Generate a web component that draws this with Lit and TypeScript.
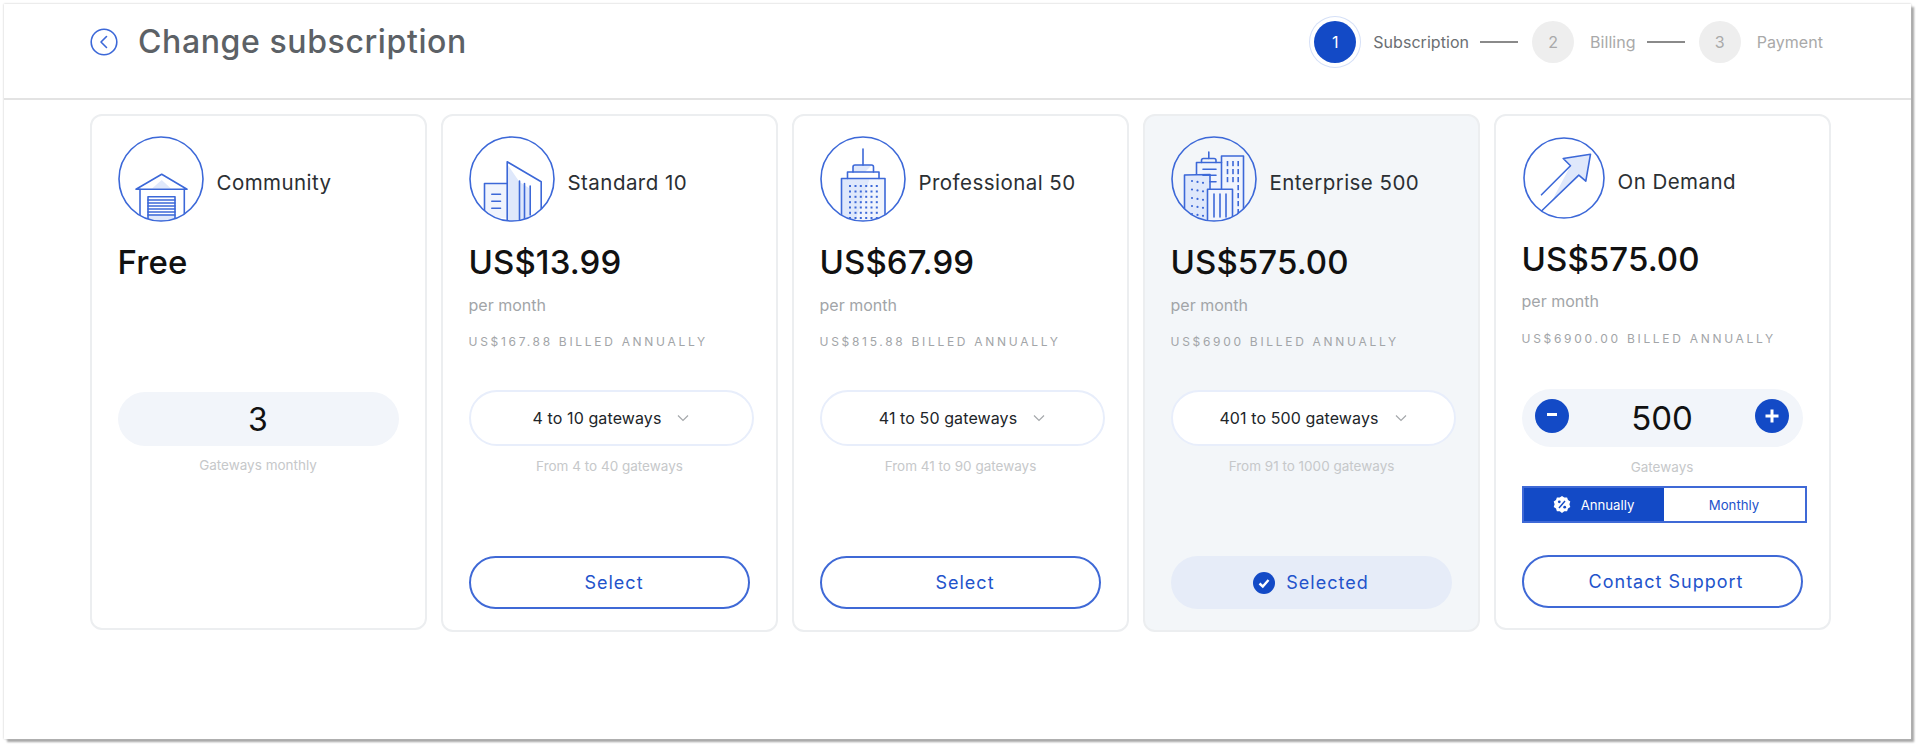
import { LitElement, html, css, svg } from "lit";
import { customElement } from "lit/decorators.js";
import { classMap } from "lit/directives/class-map.js";

const range = (from: number, to: number, step = 1) => {
  const out: number[] = [];
  for (let v = from; v <= to; v += step) out.push(v);
  return out;
};

const icons: Record<string, unknown> = {
  garage: svg`
    <path class="tint" d="M43.7 44 L34 52.5 H53 Z"/>
    <path class="tint" d="M30 78 H57 V86 H30 Z"/>
    <path d="M18 53.3 L43.7 38.3 L69 53.3 Z"/>
    <path d="M22 53.3 V82 M66.3 53.3 V80"/>
    <path d="M30 86 V60.7 H57 V86"/>
    <path d="M30 64 H57 M30 67 H57 M30 70 H57 M30 73 H57 M30 76 H57 M30 79 H57"/>`,
  tower: svg`
    <path class="tint2" d="M15.5 47.5 H38 V82 H15.5 Z"/>
    <path class="tint" d="M38.2 28 L50.5 46 L60 52 L61 84 H38.2 Z"/>
    <path d="M15.5 76 V47.5 H38.2"/>
    <path d="M38.2 84 V25.8 L72.2 45.8 V73.5"/>
    <path d="M50.5 45 V84 M55.5 47.5 V82.5 M61.2 50 V79"/>
    <path d="M22.8 58.2 H31.5 M22.8 65.2 H31.5 M22.8 72.2 H31.5"/>`,
  skyscraper: svg`
    <path class="tint" d="M33 36 V31 Q33 29 35 29 H52 L45 36 Z"/>
    <path class="tint" d="M21.5 42.5 H50 L36 84 H21.5 Z"/>
    <path class="tint2" d="M50 42.5 H65 V84 H36 Z"/>
    <path d="M43 13 V29"/>
    <path d="M33 36 V31 Q33 29 35 29 H51.5 Q53.5 29 53.5 31 V36"/>
    <path d="M27.5 42.5 V36 H59 V42.5"/>
    <path d="M21.5 80 V42.5 H65 V80"/>
    ${[50, 55.5, 60.8, 66.2, 71.5, 76.8, 82].flatMap((y) =>
      [30, 35.5, 40.8, 46.2, 51.5, 56.8].map(
        (x) => svg`<rect class="fill" x=${x - 1} y=${y - 1} width="2" height="2"/>`
      )
    )}`,
  city: svg`
    <path class="tint2" d="M25.5 26.5 H50.5 V54 H25.5 Z"/>
    <path class="tint2" d="M50.5 20 H72.5 V78 H50.5 Z"/>
    <path class="tint" d="M13.5 38.5 H39 V84 H13.5 Z"/>
    <path class="tint2" d="M36.5 53.2 H61.5 V84 H36.5 Z"/>
    <path d="M37.8 16 V22.5"/>
    <path d="M30.5 26.5 V24.5 Q30.5 22.5 32.5 22.5 H43 Q45 22.5 45 24.5 V26.5"/>
    <path d="M25.5 38 V26.5 H50.5"/>
    <path d="M32 33.2 H45 M32 39.2 H45 M39 45.8 H45"/>
    <path d="M50.5 53 V20 H72.5 V74"/>
    <path d="M13.5 74 V39 L39 38.5 V53"/>
    <path d="M36.5 84 V53.2 H61.5 V84"/>
    <path d="M43 58 V81 M49 58 V81 M55 58 V81"/>
    ${[25, 33, 41].flatMap((y) =>
      [56.5, 62, 67.2].map(
        (x) => svg`<rect class="fill" x=${x - 0.8} y=${y} width="1.6" height="5.2"/>`
      )
    )}
    ${range(49, 73, 8).map(
      (y) => svg`<rect class="fill" x="66.4" y=${y} width="1.6" height="5.2"/>`
    )}
    ${[45, 53.5, 62, 70, 78].flatMap((y) =>
      [21, 26.5, 32].map(
        (x) => svg`<circle class="fill" cx=${x} cy=${y + (x - 21) / 6} r="1.1"/>`
      )
    )}`,
  arrow: svg`
    <path class="tint" d="M47.5 28.8 L40.2 21.5 L67.5 17.2 L62.8 44.2 L55.8 38.2 L28 66 L33 56 Z"/>
    <path d="M18.5 57.8 L47.5 28.8 L40.2 21.5 L67.5 17.2 L62.8 44.2 L55.8 38.2 L18.5 74"/>`,
};

interface Plan {
  name: string;
  icon: string;
  price: string;
  billed?: string;
  range?: string;
  hint?: string;
  selected?: boolean;
}

const plans: Plan[] = [
  { name: "Community", icon: "garage", price: "Free" },
  {
    name: "Standard 10",
    icon: "tower",
    price: "US$13.99",
    billed: "US$167.88 billed annually",
    range: "4 to 10 gateways",
    hint: "From 4 to 40 gateways",
  },
  {
    name: "Professional 50",
    icon: "skyscraper",
    price: "US$67.99",
    billed: "US$815.88 billed annually",
    range: "41 to 50 gateways",
    hint: "From 41 to 90 gateways",
  },
  {
    name: "Enterprise 500",
    icon: "city",
    price: "US$575.00",
    billed: "US$6900 billed annually",
    range: "401 to 500 gateways",
    hint: "From 91 to 1000 gateways",
    selected: true,
  },
];

@customElement("app-root")
export class AppRoot extends LitElement {
  static styles = css`
    :host {
      display: block;
      height: 749px;
      padding: 4px 9px 10px 4px;
      box-sizing: border-box;
      background: #fff;
      font-family: Inter, "Liberation Sans", sans-serif;
      color: #212529;
    }

    .frame {
      height: 100%;
      box-sizing: border-box;
      background: #fff;
      box-shadow: 0 0 2px #c4c4c4, 3px 3px 2px #a6a6a6;
    }

    .header {
      height: 96px;
      box-sizing: border-box;
      border-bottom: 2px solid #e3e3e3;
      display: flex;
      align-items: flex-start;
      justify-content: space-between;
      padding: 17px 88px 0 86px;
    }

    .title {
      display: flex;
      align-items: center;
      gap: 20px;
      height: 36px;
      margin-top: 3px;
    }

    .back {
      width: 28px;
      height: 28px;
      flex: none;
    }

    h1 {
      margin: 0;
      font-size: 32px;
      line-height: 36px;
      font-weight: 500;
      letter-spacing: 0.6px;
      color: #5c6166;
    }

    .steps {
      display: flex;
      align-items: center;
      font-size: 16px;
      color: #a9a9a9;
      height: 42px;
      letter-spacing: 0.05px;
    }

    .num {
      width: 42px;
      height: 42px;
      border-radius: 50%;
      background: #eeeeee;
      color: #a9a9a9;
      display: flex;
      align-items: center;
      justify-content: center;
      margin-right: 16px;
    }

    .num.on {
      background: #134ac6;
      color: #fff;
      box-shadow: 0 0 0 4px #fff, 0 0 0 5px #d5e0f7;
      margin-right: 17px;
    }

    .steps .on-label {
      color: #6b6f73;
    }

    .line {
      width: 38px;
      height: 2px;
      background: #8a8a8a;
      margin: 0 14px 0 11px;
    }

    .plans {
      display: flex;
      align-items: flex-start;
      gap: 14.5px;
      padding: 14px 0 0 86px;
    }

    .card {
      width: 336.5px;
      height: 518px;
      box-sizing: border-box;
      border: 2px solid #eceef0;
      border-radius: 12px;
      padding: 20px 26px 0 25.5px;
      display: flex;
      flex-direction: column;
    }

    .card.selected {
      background: #f3f6f9;
    }

    .card.free,
    .card.demand {
      height: 516px;
    }

    .head {
      display: flex;
      align-items: center;
      gap: 13px;
      height: 86px;
      font-size: 20.5px;
      color: #2b2f33;
      letter-spacing: 0.45px;
    }

    .head span {
      padding-top: 6px;
    }

    .demand .head span {
      padding-top: 4px;
    }

    .head svg {
      width: 86px;
      height: 86px;
      flex: none;
    }

    .demand .head svg {
      width: 82px;
      height: 82px;
      margin: 0 0 3px 1px;
    }

    svg.art {
      fill: none;
      stroke: #3c68d8;
      stroke-width: 1.6;
      stroke-linejoin: round;
      stroke-linecap: round;
    }

    svg.art .tint {
      fill: #dfe8fb;
      stroke: none;
    }

    svg.art .tint2 {
      fill: #f0f4fd;
      stroke: none;
    }

    svg.art .fill {
      fill: #3c68d8;
      stroke: none;
    }

    .price {
      margin-top: 20px;
      font-size: 33px;
      line-height: 40px;
      font-weight: 500;
      letter-spacing: 0.1px;
      color: #111;
    }

    .per {
      margin-top: 13.5px;
      font-size: 16px;
      line-height: 18px;
      color: #a2a5a8;
    }

    .billed {
      margin-top: 21.5px;
      font-size: 12px;
      line-height: 14px;
      letter-spacing: 2.7px;
      text-transform: uppercase;
      white-space: nowrap;
      color: #a2a5a8;
    }

    .count {
      margin-top: 110px;
      width: 281px;
      height: 54px;
      border-radius: 27px;
      background: #f2f5fa;
      display: flex;
      align-items: center;
      justify-content: center;
      font-size: 32px;
      color: #111;
    }

    .note {
      text-align: center;
      font-size: 13.5px;
      line-height: 16px;
      color: #c6c8ca;
      margin-top: 11px;
    }

    .select {
      margin-top: 41px;
      width: 285px;
      height: 56px;
      box-sizing: border-box;
      border: 2px solid #e8eefb;
      border-radius: 28px;
      background: #fff;
      display: flex;
      align-items: center;
      justify-content: center;
      gap: 16px;
      font-size: 16px;
      letter-spacing: 0.1px;
      color: #212529;
    }

    .select svg {
      width: 12px;
      height: 8px;
      fill: none;
      stroke: #a5a8ab;
      stroke-width: 1.2;
    }

    .range-note {
      margin-top: 12px;
      width: 282px;
    }

    .spacer {
      flex: 1;
    }

    .btn {
      width: 281px;
      height: 53px;
      box-sizing: border-box;
      margin-bottom: 21px;
      padding-left: 10px;
      border: 2px solid #3f69d6;
      border-radius: 27px;
      display: flex;
      align-items: center;
      justify-content: center;
      gap: 11px;
      font-size: 18px;
      letter-spacing: 1px;
      color: #2353cb;
    }

    .btn.done {
      border: 0;
      padding-left: 0;
      background: #e6ecf8;
    }

    .btn svg {
      width: 22px;
      height: 22px;
    }

    .demand .price {
      margin-top: 17px;
    }

    .demand .per {
      margin-top: 13px;
    }

    .demand .billed {
      margin-top: 22px;
    }

    .stepper {
      margin-top: 43px;
      width: 281px;
      height: 58px;
      border-radius: 29px;
      background: #f2f5fa;
      display: flex;
      align-items: center;
      justify-content: space-between;
      padding: 0 13px;
      box-sizing: border-box;
      font-size: 33px;
      color: #111;
    }

    .round {
      width: 34px;
      height: 34px;
      flex: none;
      margin-bottom: 5px;
    }

    .toggle {
      margin-top: 11px;
      width: 285px;
      height: 37px;
      box-sizing: border-box;
      border: 2px solid #3f69d6;
      display: flex;
      font-size: 13.2px;
      color: #2353cb;
    }

    .toggle div {
      display: flex;
      align-items: center;
      justify-content: center;
      gap: 10px;
    }

    .toggle .active {
      width: 140px;
      background: #134ac6;
      color: #fff;
    }

    .toggle .off {
      flex: 1;
    }

    .toggle svg {
      width: 18px;
      height: 18px;
    }

    .demand .note {
      margin-top: 12px;
    }

    .demand .btn {
      margin-top: auto;
      margin-bottom: 20px;
      padding-left: 8px;
    }
  `;

  private art(name: string) {
    // the arrow icon is a little smaller than the building ones
    const size = name === "arrow" ? 82 : 86;
    const r = size / 2 - 1;
    return html`<svg class="art" viewBox="0 0 ${size} ${size}">
      <defs>
        <clipPath id="clip-${name}">
          <circle cx=${size / 2} cy=${size / 2} r=${r}></circle>
        </clipPath>
      </defs>
      <g clip-path="url(#clip-${name})">${icons[name]}</g>
      <circle cx=${size / 2} cy=${size / 2} r=${r}></circle>
    </svg>`;
  }

  private head(p: { name: string; icon: string }) {
    return html`<div class="head">${this.art(p.icon)}<span>${p.name}</span></div>`;
  }

  private card(p: Plan) {
    if (!p.range) {
      return html`<section class="card free">
        ${this.head(p)}
        <div class="price">${p.price}</div>
        <div class="count">3</div>
        <div class="note">Gateways monthly</div>
      </section>`;
    }
    return html`<section class=${classMap({ card: true, selected: !!p.selected })}>
      ${this.head(p)}
      <div class="price">${p.price}</div>
      <div class="per">per month</div>
      <div class="billed">${p.billed}</div>
      <div class="select">
        <span>${p.range}</span>
        <svg viewBox="0 0 12 8"><path d="M1 1.5 L6 6.5 L11 1.5"></path></svg>
      </div>
      <div class="note range-note">${p.hint}</div>
      <div class="spacer"></div>
      ${p.selected
        ? html`<div class="btn done">
            <svg viewBox="0 0 22 22">
              <circle cx="11" cy="11" r="11" fill="#134ac6"></circle>
              <path d="M6.5 11.5 L9.8 14.5 L15.5 8" fill="none" stroke="#fff" stroke-width="2.4"></path>
            </svg>
            Selected
          </div>`
        : html`<div class="btn">Select</div>`}
    </section>`;
  }

  render() {
    return html`<div class="frame">
      <header class="header">
        <div class="title">
          <svg class="back" viewBox="0 0 28 28" fill="none" stroke="#3c68d8" stroke-width="1.6">
            <circle cx="14" cy="14" r="12.8"></circle>
            <path d="M16.5 8.5 L11 14 L16.5 19.5" stroke-linecap="round" stroke-linejoin="round"></path>
          </svg>
          <h1>Change subscription</h1>
        </div>
        <div class="steps">
          <div class="num on">1</div>
          <span class="on-label">Subscription</span>
          <div class="line"></div>
          <div class="num">2</div>
          <span>Billing</span>
          <div class="line"></div>
          <div class="num">3</div>
          <span>Payment</span>
        </div>
      </header>
      <main class="plans">
        ${plans.map((p) => this.card(p))}
        <section class="card demand">
          ${this.head({ name: "On Demand", icon: "arrow" })}
          <div class="price">US$575.00</div>
          <div class="per">per month</div>
          <div class="billed">US$6900.00 billed annually</div>
          <div class="stepper">
            <svg class="round" viewBox="0 0 34 34">
              <circle cx="17" cy="17" r="17" fill="#134ac6"></circle>
              <path d="M12 15.5 H22" stroke="#fff" stroke-width="3"></path>
            </svg>
            <span>500</span>
            <svg class="round" viewBox="0 0 34 34">
              <circle cx="17" cy="17" r="17" fill="#134ac6"></circle>
              <path d="M10.5 17 H23.5 M17 10.5 V23.5" stroke="#fff" stroke-width="3"></path>
            </svg>
          </div>
          <div class="note">Gateways</div>
          <div class="toggle">
            <div class="active">
              <svg viewBox="0 0 18 18">
                <path
                  fill="#fff"
                  d="M9 0 L11.3 1.6 L14.1 1.4 L15 4 L17.3 5.6 L16.4 8.3 L17.3 11 L15 12.6 L14.1 15.3 L11.3 15.2 L9 17 L6.7 15.2 L3.9 15.3 L3 12.6 L.7 11 L1.6 8.3 L.7 5.6 L3 4 L3.9 1.4 L6.7 1.6 Z"
                ></path>
                <path d="M6 12 L12 5" stroke="#134ac6" stroke-width="1.4"></path>
                <circle cx="6.3" cy="5.8" r="1.4" fill="#134ac6"></circle>
                <circle cx="11.7" cy="11.2" r="1.4" fill="#134ac6"></circle>
              </svg>
              Annually
            </div>
            <div class="off">Monthly</div>
          </div>
          <div class="btn">Contact Support</div>
        </section>
      </main>
    </div>`;
  }
}
